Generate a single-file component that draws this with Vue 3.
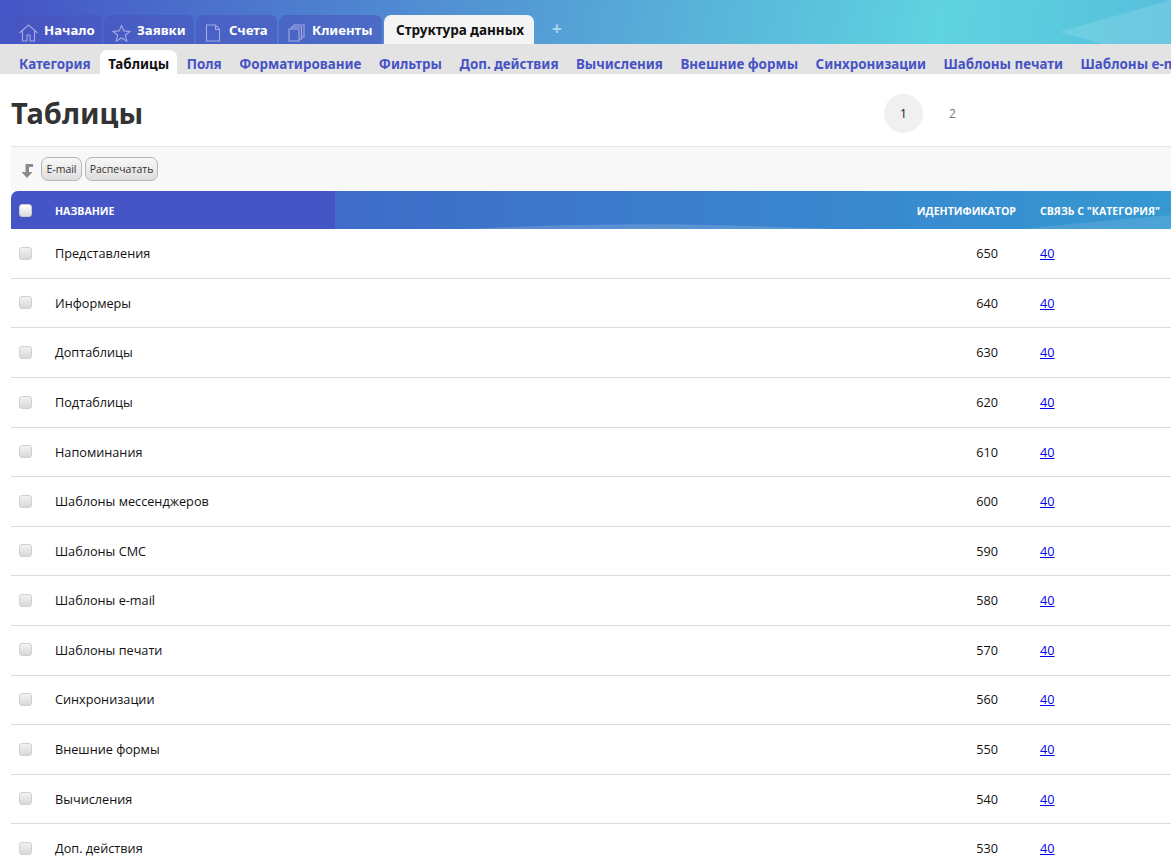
<script setup>
const tabs = [
  { label: 'Начало', icon: 'home', cls: 't1' },
  { label: 'Заявки', icon: 'star', cls: 't2' },
  { label: 'Счета', icon: 'doc', cls: 't3' },
  { label: 'Клиенты', icon: 'copy', cls: 't4' }
]
const subs = ['Категория', 'Таблицы', 'Поля', 'Форматирование', 'Фильтры', 'Доп. действия', 'Вычисления', 'Внешние формы', 'Синхронизации', 'Шаблоны печати', 'Шаблоны e-mail']
const rows = [
  ['Представления', 650], ['Информеры', 640], ['Доптаблицы', 630], ['Подтаблицы', 620],
  ['Напоминания', 610], ['Шаблоны мессенджеров', 600], ['Шаблоны СМС', 590], ['Шаблоны e-mail', 580],
  ['Шаблоны печати', 570], ['Синхронизации', 560], ['Внешние формы', 550], ['Вычисления', 540], ['Доп. действия', 530]
]
</script>

<template>
  <div class="page">
    <header class="top">
      <svg class="wedge" viewBox="0 0 112 44" preserveAspectRatio="none"><polygon points="0,32 112,0 112,44 44,44" fill="#fff" fill-opacity="0.13" /></svg>
      <nav class="tabs">
        <a v-for="t in tabs" :key="t.label" class="tab" :class="t.cls">
          <svg class="ico" viewBox="0 0 19 19" fill="none" stroke="#a3aae4" stroke-width="1.1">
            <path v-if="t.icon === 'home'" d="M.5 10 9.500 2l9 8M3.500 8v10h4.500v-6h3v6h4.500V8" />
            <path v-else-if="t.icon === 'star'" d="M9.500 2.500l2.400 5.400 6 .5-4.600 3.900 1.500 5.800-5.300-3.100-5.300 3.100 1.500-5.800L1.100 8.400l6-.5z" />
            <path v-else-if="t.icon === 'doc'" d="M2.500 2h9l4 4.500V18H2.500zM11.500 2v4.500h4" />
            <path v-else d="M2 6h10v12H2zM4.500 6V4h10v12H12M7 4V2h10v12h-2.500" />
          </svg>
          <span>{{ t.label }}</span>
        </a>
        <a class="tab active">Структура данных</a>
        <span class="plus">+</span>
      </nav>
    </header>
    <nav class="subs">
      <a v-for="s in subs" :key="s" class="sub" :class="{ on: s === 'Таблицы' }">{{ s }}</a>
    </nav>
    <main class="content">
      <div class="head">
        <h1>Таблицы</h1>
        <div class="pager"><span class="pg cur">1</span><span class="pg">2</span></div>
      </div>
      <div class="tools">
        <svg class="down" viewBox="0 0 12 14"><path d="M4.500 0H12V3H8V8h3.500L6 14 .5 8h4z" fill="#8a8a8a" /></svg>
        <button class="btn b1">E-mail</button>
        <button class="btn b2">Распечатать</button>
      </div>
      <div class="thead">
        <svg class="swoosh" viewBox="0 0 836 38" preserveAspectRatio="none">
          <path d="M130 38C230 33 330 32 410 35 C450 36 480 37 500 38z" fill="#fff" fill-opacity="0.16" />
          <path d="M690 38C740 32 790 28 836 24V38z" fill="#fff" fill-opacity="0.11" />
        </svg>
        <div class="cell c0"><span class="chk"></span></div>
        <div class="cell c1">НАЗВАНИЕ</div>
        <div class="cell c2">ИДЕНТИФИКАТОР</div>
        <div class="cell c3">СВЯЗЬ С "КАТЕГОРИЯ"</div>
      </div>
      <div v-for="r in rows" :key="r[1]" class="row">
        <div class="cell c0"><span class="chk"></span></div>
        <div class="cell c1">{{ r[0] }}</div>
        <div class="cell c2">{{ r[1] }}</div>
        <div class="cell c3"><a class="link">40</a></div>
      </div>
    </main>
  </div>
</template>

<style>
html, body { margin: 0; overflow: hidden; background: #fff; }
</style>
<style scoped>
.page { width: 1171px; height: 865px; overflow: hidden; font-family: "Open Sans", "Noto Sans", sans-serif; font-size: 12.700px; color: #111; }
.top { position: relative; height: 44px; background: linear-gradient(100deg, #4555c6 0%, #5fd3e0 80%, #56bfdc 100%); overflow: hidden; }
.wedge { position: absolute; right: 0; top: 0; width: 112px; height: 44px; }
.tabs { position: relative; display: flex; align-items: flex-end; height: 44px; padding-left: 11px; gap: 2px; }
.tab { box-sizing: border-box; height: 29px; display: flex; align-items: center; gap: 6px; padding-left: 8px; border-radius: 7px 7px 0 0; background: rgba(72, 84, 190, 0.55); color: #fff; font-family: "Noto Sans", sans-serif; font-weight: 700; font-size: 13.200px; white-space: nowrap; }
.t1 { width: 91px; }
.t2 { width: 90px; }
.t3 { width: 81px; }
.t4 { width: 103px; }
.ico { width: 19px; height: 19px; flex: none; margin-top: 5px; }
.tab.active { background: #f4f4f4; color: #111; width: 150px; padding-left: 12px; font-size: 13.500px; }
.plus { color: #a9d8ea; font: 700 17px "Noto Sans", sans-serif; margin: 0 0 4px 16px; }
.subs { display: flex; align-items: flex-end; height: 30px; background: #e3e3e3; padding-left: 11px; white-space: nowrap; }
.sub { box-sizing: border-box; height: 24px; line-height: 29px; padding: 0 8px; margin-right: 1.500px; color: #4753c4; font-family: "Noto Sans", sans-serif; font-weight: 700; font-size: 13.400px; border-radius: 7px 7px 0 0; }
.sub.on { background: #fff; color: #111; }
.content { padding-left: 11px; }
.head { position: relative; height: 72px; border-bottom: 1px solid #e6e6e6; }
h1 { margin: 0; padding-top: 20px; font: 700 29px/38px "Noto Sans", sans-serif; color: #333; }
.pager { position: absolute; left: 873px; top: 20px; display: flex; }
.pg { width: 39px; height: 39px; border-radius: 50%; display: flex; align-items: center; justify-content: center; margin-right: 10px; color: #777; font-size: 12px; }
.pg.cur { background: #f0f0f0; color: #111; }
.tools { display: flex; align-items: center; height: 44px; background: #f8f8f8; padding-left: 10px; gap: 3px; }
.down { width: 12px; height: 14px; margin: 3px 5px 0 0; }
.btn { height: 24px; padding: 0; border: 1px solid #b5b5b5; border-radius: 7px; background: linear-gradient(#f8f8f8, #dedede); color: #333; font: 10.500px "Open Sans", sans-serif; }
.b1 { width: 41px; }
.b2 { width: 73px; }
.thead { position: relative; display: flex; align-items: center; box-sizing: border-box; height: 38.300px; padding-top: 1px; border-radius: 7px 0 0 0; background: linear-gradient(90deg, #4555c6 0, #4555c6 324px, #3f6cc8 324px, #3599d2 100%); overflow: hidden; color: #fff; font-weight: 700; font-size: 10.600px; }
.swoosh { position: absolute; left: 324px; top: 0; width: 836px; height: 38px; }
.row { display: flex; align-items: center; box-sizing: border-box; height: 49.580px; padding-bottom: 0.600px; border-bottom: 1px solid #dcdcdc; }
.cell { position: relative; white-space: nowrap; }
.c0 { width: 44px; padding-left: 8px; box-sizing: border-box; display: flex; }
.c1 { width: 829px; }
.c2 { width: 132px; text-align: right; padding-right: 18px; box-sizing: border-box; }
.thead .c2 { padding-right: 0; }
.c3 { margin-left: 24px; }
.chk { box-sizing: border-box; width: 13px; height: 13px; border-radius: 3px; border: 1px solid #d0d0d0; background: linear-gradient(#f3f3f3, #d8d8d8); }
.thead .chk { background: linear-gradient(#fff, #ddd); border-color: #ccc; }
.link { color: #0000ee; text-decoration: underline; }
</style>
